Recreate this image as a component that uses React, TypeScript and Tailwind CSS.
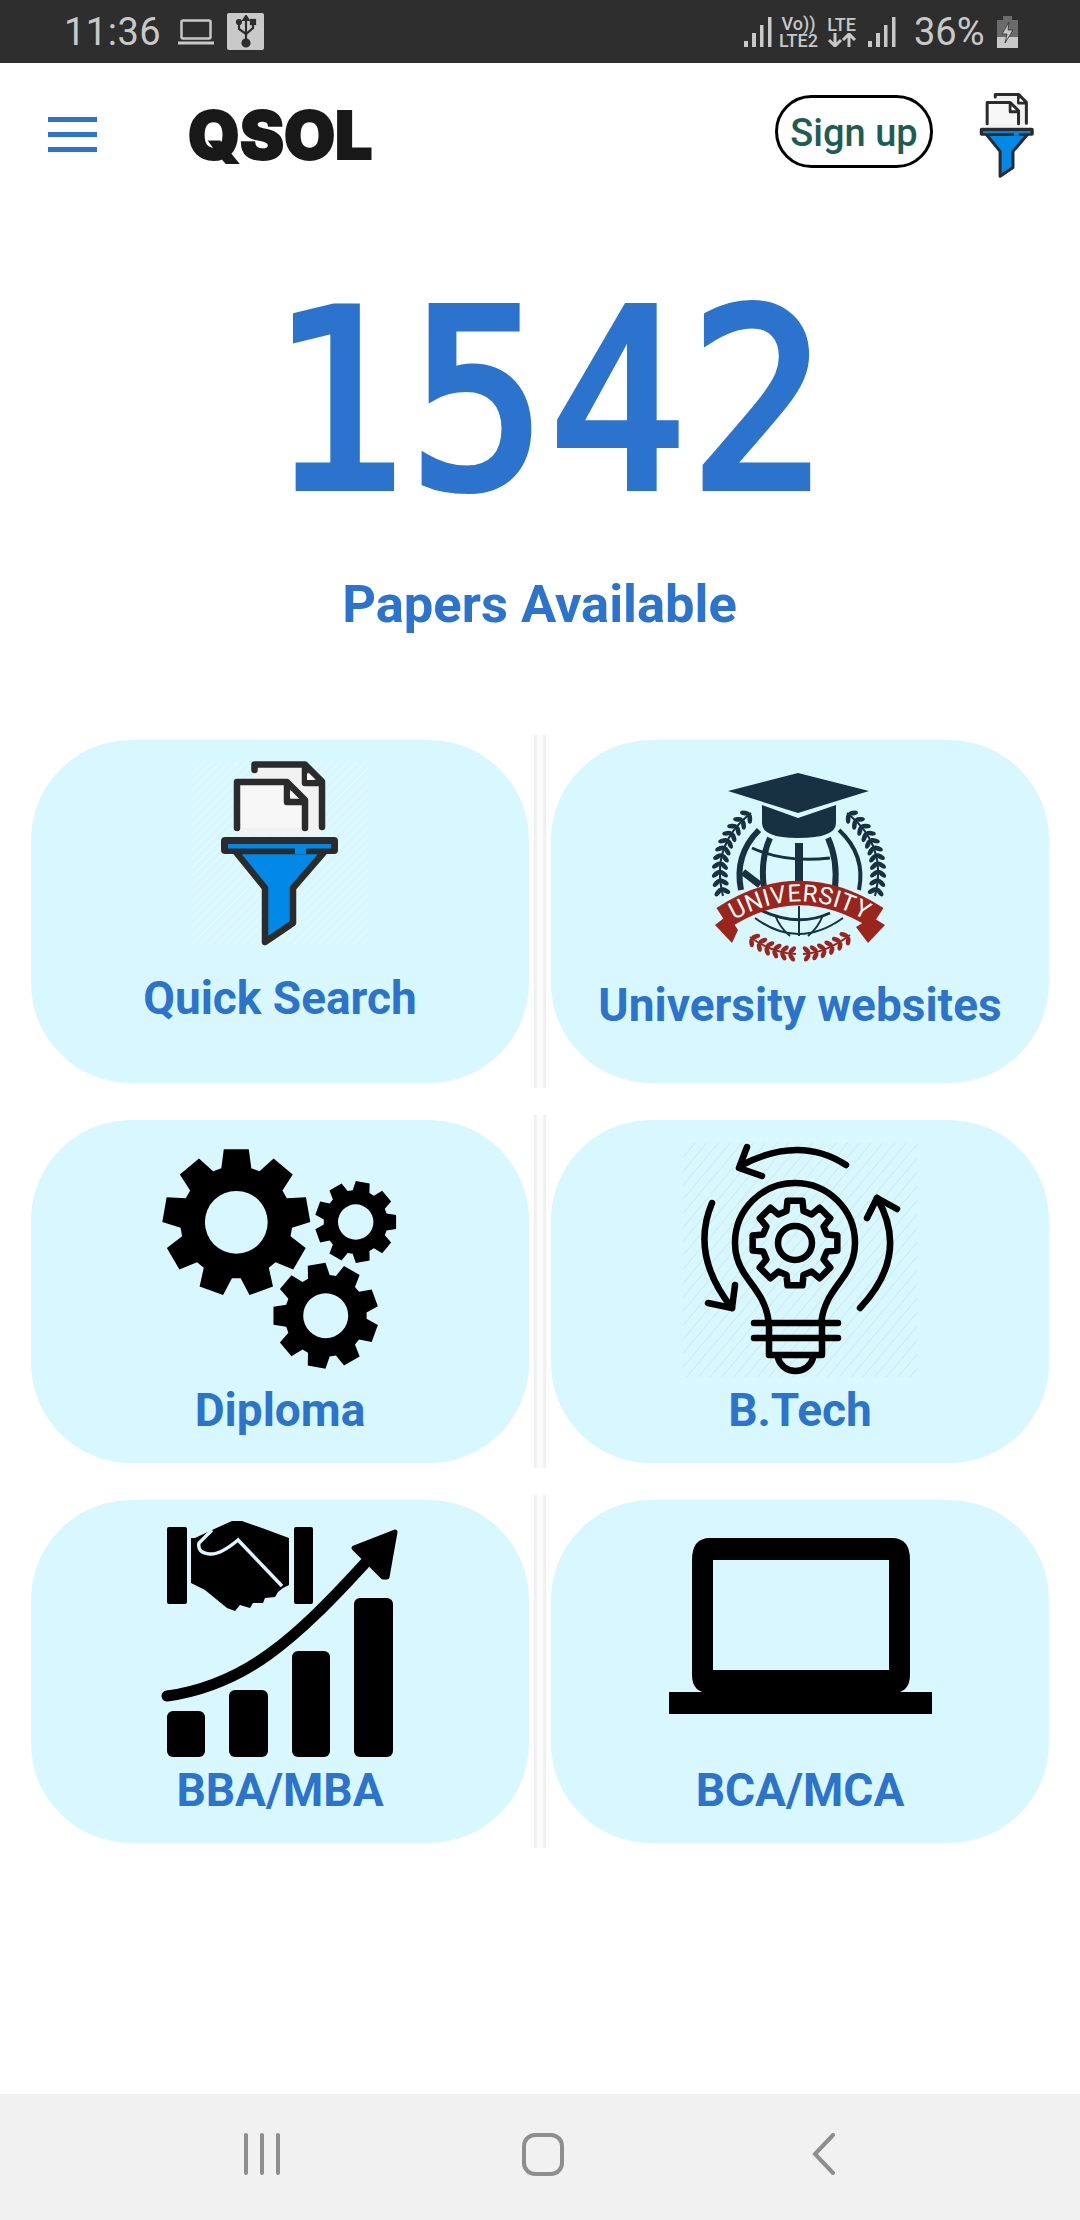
import React from "react";

const roboto = "font-['Roboto',sans-serif]";

function gearPath(cx: number, cy: number, outer: number, root: number, teeth: number, offsetDeg: number, toothW: number, tipW: number) {
  const pts: string[] = [];
  const P = (r: number, a: number) => `${(cx + r * Math.sin(a)).toFixed(2)} ${(cy - r * Math.cos(a)).toFixed(2)}`;
  for (let i = 0; i < teeth; i++) {
    const a = ((offsetDeg + (i * 360) / teeth) * Math.PI) / 180;
    const hb = Math.asin(toothW / 2 / root);
    const ht = Math.asin(tipW / 2 / outer);
    pts.push(P(root, a - hb), P(outer, a - ht), P(outer, a + ht), P(root, a + hb));
  }
  return "M" + pts.join(" L") + " Z";
}

function circleHole(cx: number, cy: number, r: number) {
  return `M${cx - r} ${cy} a${r} ${r} 0 1 0 ${2 * r} 0 a${r} ${r} 0 1 0 ${-2 * r} 0 Z`;
}

function FilterIcon({ className, hatch = true }: { className: string; hatch?: boolean }) {
  const s = "#2b2b2b";
  return (
    <svg viewBox="0 0 190 195" className={className}>
      {hatch && (
        <>
          <defs>
            <pattern id="fh" width="6" height="6" patternUnits="userSpaceOnUse" patternTransform="rotate(45)">
              <rect width="6" height="6" fill="none" />
              <line x1="0" y1="0" x2="0" y2="6" stroke="#ffffff" strokeOpacity="0.35" strokeWidth="2" />
            </pattern>
          </defs>
          <rect x="6" y="7" width="178" height="183" fill="url(#fh)" />
        </>
      )}
      <path d="M69 10 H120 L137 27 V80 H52 V27 H69 Z" fill="#f2f2f2" />
      <path d="M69.500 15 V9.500 H120 L137 26.500 V72" fill="none" stroke={s} strokeWidth="6.500" strokeLinecap="round" strokeLinejoin="round" />
      <path d="M120 10 V28 H137" fill="none" stroke={s} strokeWidth="6.500" strokeLinejoin="round" />
      <path d="M122 18 L130 25 H122 Z" fill="#fff" />
      <path d="M52 73 V27 H102 L120 45 V73" fill="#f7f7f7" stroke={s} strokeWidth="6.500" strokeLinecap="round" strokeLinejoin="round" />
      <path d="M102 27 V47 H120" fill="none" stroke={s} strokeWidth="6.500" strokeLinejoin="round" />
      <path d="M105 36 L112 43 H105 Z" fill="#fff" />
      <path d="M50 96 L80 133 V187 L108 168 V133 L140 96 Z" fill="#0288e6" stroke={s} strokeWidth="6.500" strokeLinejoin="round" />
      <rect x="36" y="82" width="117" height="17" rx="4" fill={s} />
      <rect x="43" y="89" width="103" height="4.500" fill="#0288e6" />
      <rect x="110" y="93" width="11" height="6" fill="#0288e6" />
    </svg>
  );
}

function Leaves({ p0, c, p1, n, color, w, h }: { p0: number[]; c: number[]; p1: number[]; n: number; color: string; w: number; h: number }) {
  const items: React.ReactNode[] = [];
  for (let i = 0; i < n; i++) {
    const t = (i + 0.5) / n;
    const x = (1 - t) * (1 - t) * p0[0] + 2 * t * (1 - t) * c[0] + t * t * p1[0];
    const y = (1 - t) * (1 - t) * p0[1] + 2 * t * (1 - t) * c[1] + t * t * p1[1];
    const dx = 2 * (1 - t) * (c[0] - p0[0]) + 2 * t * (p1[0] - c[0]);
    const dy = 2 * (1 - t) * (c[1] - p0[1]) + 2 * t * (p1[1] - c[1]);
    const ang = (Math.atan2(dy, dx) * 180) / Math.PI;
    const off = h * 0.42;
    const nx = (-dy / Math.hypot(dx, dy)) * off;
    const ny = (dx / Math.hypot(dx, dy)) * off;
    items.push(
      <ellipse key={`a${i}`} cx={x + nx} cy={y + ny} rx={w} ry={h * 0.26} fill={color} transform={`rotate(${ang + 50} ${x + nx} ${y + ny})`} />,
      <ellipse key={`b${i}`} cx={x - nx} cy={y - ny} rx={w} ry={h * 0.26} fill={color} transform={`rotate(${ang - 50} ${x - nx} ${y - ny})`} />
    );
  }
  return (
    <g>
      <path d={`M${p0[0]} ${p0[1]} Q${c[0]} ${c[1]} ${p1[0]} ${p1[1]}`} fill="none" stroke={color} strokeWidth="2" />
      {items}
    </g>
  );
}

function UniversityIcon() {
  const navy = "#173042";
  const red = "#9b241c";
  return (
    <svg viewBox="0 0 280 220" className="block w-[280px] h-[220px]">
      <path d="M68 41 L138 23 L209 41 L138 63 Z" fill={navy} />
      <path d="M102 55 L138 68 L176 55 V73 Q176 88 138 88 Q102 88 102 73 Z" fill={navy} />
      <g fill="none" stroke={navy}>
        <path d="M99 80 Q74 105 81 140" strokeWidth="6" />
        <path d="M179 80 Q206 105 199 140" strokeWidth="4" />
        <path d="M110 88 Q100 110 104 138" strokeWidth="6" />
        <path d="M168 88 Q178 110 175 138" strokeWidth="6" />
        <path d="M139 93 V136" strokeWidth="8" />
        <path d="M92 98 Q125 113 170 108" strokeWidth="3" />
        <path d="M83 122 L100 135" strokeWidth="7" />
        <path d="M95 168 Q138 200 183 168" strokeWidth="2" />
        <path d="M100 160 Q138 178 170 163" strokeWidth="3" />
        <path d="M139 156 V186" strokeWidth="2" />
        <path d="M115 165 Q120 178 130 186" strokeWidth="2" />
        <path d="M163 165 Q158 178 148 186" strokeWidth="2" />
      </g>
      <Leaves p0={[91, 63]} c={[50, 95]} p1={[63, 146]} n={11} color={navy} w={5} h={9} />
      <Leaves p0={[187, 63]} c={[228, 95]} p1={[215, 146]} n={11} color={navy} w={5} h={9} />
      <path d="M55 175 L72 193 L78 180 L68 165 Z" fill={red} />
      <path d="M225 175 L208 193 L196 177 L212 167 Z" fill={red} />
      <path d="M63 168 Q139 118 217 168" fill="none" stroke={red} strokeWidth="24" />
      <path id="ut" d="M63 177 Q139 126 217 177" fill="none" />
      <text fontFamily="Roboto, sans-serif" fontSize="24" fill="#ffffff" letterSpacing="0.600">
        <textPath href="#ut" startOffset="50%" textAnchor="middle">UNIVERSITY</textPath>
      </text>
      <Leaves p0={[90, 187]} c={[112, 203]} p1={[136, 204]} n={6} color={red} w={4.5} h={9} />
      <Leaves p0={[190, 185]} c={[166, 203]} p1={[143, 204]} n={6} color={red} w={4.5} h={9} />
    </svg>
  );
}

function GearsIcon() {
  const a = gearPath(81.3, 87.3, 74, 56, 9, 0, 30, 25) + circleHole(81.3, 87.3, 31.4);
  const b = gearPath(200.7, 87, 41, 32, 9, 10, 17, 14) + circleHole(200.7, 87, 17.7);
  const c = gearPath(170.7, 180.7, 53, 41, 9, -10, 22, 18) + circleHole(170.7, 180.7, 22.5);
  return (
    <svg viewBox="0 0 250 240" className="block w-[250px] h-[240px]">
      <path d={a} fillRule="evenodd" fill="#000" />
      <path d={b} fillRule="evenodd" fill="#000" />
      <path d={c} fillRule="evenodd" fill="#000" />
    </svg>
  );
}

function BulbIcon() {
  return (
    <svg viewBox="0 0 260 250" className="block w-[260px] h-[250px]">
      <defs>
        <pattern id="bh" width="9" height="9" patternUnits="userSpaceOnUse" patternTransform="rotate(40)">
          <line x1="0" y1="0" x2="0" y2="9" stroke="#b9e2ee" strokeOpacity="0.5" strokeWidth="2" />
        </pattern>
      </defs>
      <rect x="13" y="13" width="234" height="234" fill="url(#bh)" />
      <g fill="none" stroke="#000" strokeWidth="6.500" strokeLinecap="round" strokeLinejoin="round">
        <path d="M98.500 191 C96 170 84 158 76 146 C68 135 65 125 65 113 A60 60 0 0 1 185 113 C185 125 182 135 174 146 C166 158 154 170 151.500 191" />
        <path d="M84 193 H168 M84 208 H168" />
        <path d="M99 193 V225 H152 V193" />
        <path d="M108 228 A18 17 0 0 0 143 228" />
        <path d={gearPath(125, 113, 43, 33, 8, 0, 17, 15)} />
        <circle cx="125" cy="113" r="17" />
        <path d="M176 35 Q130 5 72 35" />
        <path d="M77 17 L69 38 L92 46" />
        <path d="M42 73 Q20 125 62 178" />
        <path d="M65 155 L62 178 L38 173" />
        <path d="M190 178 Q240 125 207 68" />
        <path d="M197 88 L207 68 L227 79" />
      </g>
    </svg>
  );
}

function GrowthIcon() {
  const bg = "#d9f7fe";
  return (
    <svg viewBox="0 0 250 245" className="block w-[250px] h-[245px]">
      <g fill="#000">
        <rect x="12" y="196" width="38" height="46" rx="6" />
        <rect x="74" y="175" width="39" height="67" rx="6" />
        <rect x="137" y="136" width="38" height="106" rx="6" />
        <rect x="199" y="83" width="39" height="159" rx="6" />
        <rect x="12" y="12" width="20" height="77" rx="2" />
        <rect x="139" y="12" width="19" height="77" rx="2" />
        <path d="M36 23 L40 23 L57 15 L77 6 L87 6 L107 13 L134 23 V70 L128 73 L123 77 L120 82 L110 83 L108 88 L98 88 L95 93 L85 90 L80 96 L72 93 L50 75 L36 68 Z" />
        <path d="M199 33 L240 17 L232 62 L228 62 Z" stroke="#000" strokeWidth="5" strokeLinejoin="round" />
      </g>
      <path d="M57 15 L44 28 Q42 38 55 39 Q65 40 83 25 L127 71" fill="none" stroke={bg} strokeWidth="3.500" />
      <path d="M12 181 C90 170 140 125 212 46" fill="none" stroke="#000" strokeWidth="11" strokeLinecap="round" />
    </svg>
  );
}

function LaptopIcon() {
  return (
    <svg viewBox="0 0 263 176" className="block w-[263px] h-[176px]">
      <path d="M41 0 H223 Q241 0 241 22 V137 Q241 155 223 155 H41 Q23 155 23 137 V22 Q23 0 41 0 Z M44 22 V132 H220 V22 Z" fillRule="evenodd" fill="#000" />
      <rect x="0" y="154" width="263" height="22" fill="#000" />
    </svg>
  );
}

function Signal({ ml }: { ml: string }) {
  return (
    <svg viewBox="0 0 28 30" className={`block w-[28px] h-[30px] ${ml}`} fill="#c8c8c8">
      <rect x="0" y="24" width="4" height="6" />
      <rect x="8" y="16" width="4" height="14" />
      <rect x="16" y="8" width="3.500" height="22" />
      <rect x="24" y="0" width="3.500" height="30" />
    </svg>
  );
}

function Card({ label, children, pad, gap }: { label: string; children: React.ReactNode; pad: string; gap: string }) {
  return (
    <div className="bg-white p-[5px] h-[353px]">
      <div className={`h-[343px] rounded-[100px] bg-[#d9f7fe] flex flex-col items-center ${pad}`}>
        {children}
        <div className={`${gap} text-[46px] leading-[56px] font-bold text-[#2b73cc] whitespace-nowrap`}>{label}</div>
      </div>
    </div>
  );
}

function Divider() {
  return <div className="h-[353px] bg-[linear-gradient(90deg,#ececec,#fcfcfc_35%,#fcfcfc_65%,#ececec)]" />;
}

export default function App() {
  return (
    <div className={`w-[1080px] h-[2220px] bg-white flex flex-col overflow-hidden ${roboto}`}>
      {/* status bar */}
      <div className="h-[63px] shrink-0 bg-[#2e2e2e] flex items-center text-[#c8c8c8]">
        <span className="ml-[64px] w-[98px] text-[38px] leading-[40px] tracking-[0.5px]">11:36</span>
        <svg viewBox="0 0 36 26" className="block ml-[16px] w-[36px] h-[26px]" fill="none" stroke="#c8c8c8">
          <rect x="3.500" y="1.500" width="29" height="18" rx="1.500" strokeWidth="2.500" />
          <path d="M0 24 H36" strokeWidth="3" />
        </svg>
        <div className="ml-[13px] w-[37px] h-[37px] rounded-[2px] bg-[#c9c9c9] flex items-center justify-center">
          <svg viewBox="0 0 24 34" className="block w-[24px] h-[34px]" fill="none" stroke="#2e2e2e" strokeWidth="2.200">
            <path d="M12 3 V27" />
            <path d="M5 8 V14 L12 19 L19 13 V8" />
            <circle cx="12" cy="28" r="3.500" fill="#2e2e2e" />
            <circle cx="5" cy="7" r="2" fill="#2e2e2e" />
            <rect x="17" y="5" width="4" height="4" fill="#2e2e2e" />
            <path d="M12 1 L9.500 5 H14.500 Z" fill="#2e2e2e" />
          </svg>
        </div>
        <Signal ml="ml-[480px]" />
        <div className="ml-[6px] w-[41px] flex flex-col items-center text-[18px] leading-[17px] font-medium">
          <span>Vo))</span>
          <span>LTE2</span>
        </div>
        <div className="ml-[7px] w-[31px] flex flex-col items-center text-[18px] leading-[17px] font-medium">
          <span>LTE</span>
          <svg viewBox="0 0 31 14" className="block w-[31px] h-[14px]" fill="none" stroke="#c8c8c8" strokeWidth="3">
            <path d="M9 0 V12 M3 7 L9 13 L15 7" />
            <path d="M23 14 V2 M17 7 L23 1 L29 7" />
          </svg>
        </div>
        <Signal ml="ml-[11px]" />
        <span className="ml-[18px] w-[72px] text-[38px] leading-[40px]">36%</span>
        <svg viewBox="0 0 21 32" className="block ml-[11px] w-[21px] h-[32px]">
          <rect x="6" y="0" width="9" height="4" fill="#6b6b6b" />
          <rect x="0" y="4" width="21" height="17" fill="#6b6b6b" />
          <rect x="0" y="21" width="21" height="11" fill="#c8c8c8" />
          <path d="M12 6 L5 18 H10 L8 27 L16 14 H11 Z" fill="#c8c8c8" stroke="#2e2e2e" strokeWidth="0.800" />
        </svg>
      </div>

      {/* header */}
      <div className="h-[137px] shrink-0 flex items-center">
        <div className="ml-[48px] w-[49px] flex flex-col gap-[10px] mt-[6px]">
          <div className="h-[5px] bg-[#2b73cc]" />
          <div className="h-[5px] bg-[#2b73cc]" />
          <div className="h-[5px] bg-[#2b73cc]" />
        </div>
        <div className="ml-[91px] w-[186px] mt-[6px] font-['Inter',sans-serif] text-[66px] leading-[70px] font-black tracking-[0px] text-[#191919] [-webkit-text-stroke:2px_#191919] whitespace-nowrap">QSOL</div>
        <div className="ml-[401px] w-[158px] h-[73px] rounded-full border-[3px] border-black flex items-center justify-center text-[38px] font-medium text-[#1f5c55] -mt-[1px]">
          <span className="mt-[5px]">Sign up</span>
        </div>
        <FilterIcon className="block ml-[30px] w-[88px] h-[90px] mt-[7px]" hatch={false} />
      </div>

      {/* hero */}
      <div className="mt-[104px] h-[196px] flex items-center justify-center font-['DejaVu_Sans_Mono',monospace] text-[246px] leading-[196px] font-normal tracking-[-8px] text-[#2b73cc] [-webkit-text-stroke:8px_#2b73cc] pl-[8px]">
        <span className="inline-block scale-x-[0.92]">1</span>
        <span className="inline-block scale-x-[0.92]">5</span>
        <span className="inline-block scale-x-[0.92]">4</span>
        <span className="inline-block scale-x-[0.92]">2</span>
      </div>
      <div className="mt-[74px] h-[60px] text-center text-[52.500px] leading-[60px] font-bold text-[#2b73cc] -ml-[1px]">Papers Available</div>

      {/* grid */}
      <div className="mt-[101px] mx-[26px] grid grid-cols-[508px_12px_508px] gap-y-[27px]">
        <Card label="Quick Search" pad="pt-[15px]" gap="mt-[20px]">
          <FilterIcon className="block w-[190px] h-[195px]" />
        </Card>
        <Divider />
        <Card label="University websites" pad="pt-[10px]" gap="mt-[7px]">
          <UniversityIcon />
        </Card>
        <Card label="Diploma" pad="pt-[15px]" gap="mt-[7px]">
          <GearsIcon />
        </Card>
        <Divider />
        <Card label="B.Tech" pad="pt-[10px]" gap="mt-[2px]">
          <BulbIcon />
        </Card>
        <Card label="BBA/MBA" pad="pt-[15px]" gap="mt-[2px]">
          <GrowthIcon />
        </Card>
        <Divider />
        <Card label="BCA/MCA" pad="pt-[38px]" gap="mt-[48px]">
          <LaptopIcon />
        </Card>
      </div>

      <div className="flex-1" />

      {/* nav bar */}
      <div className="h-[126px] shrink-0 bg-[#f1f1f1] flex items-center justify-center pl-[6px] pb-[6px]">
        <div className="w-[281px] flex justify-center">
          <svg viewBox="0 0 38 42" className="block w-[38px] h-[42px]" stroke="#8e8e8e" strokeWidth="4" strokeLinecap="round">
            <path d="M3 2 V40 M19 2 V40 M35 2 V40" />
          </svg>
        </div>
        <div className="w-[281px] flex justify-center">
          <div className="w-[42px] h-[43px] rounded-[13px] border-[4px] border-[#8e8e8e]" />
        </div>
        <div className="w-[281px] flex justify-center">
          <svg viewBox="0 0 24 42" className="block w-[24px] h-[42px]" fill="none" stroke="#8e8e8e" strokeWidth="4" strokeLinecap="round" strokeLinejoin="miter">
            <path d="M21 2 L3 21 L21 40" />
          </svg>
        </div>
      </div>
    </div>
  );
}
